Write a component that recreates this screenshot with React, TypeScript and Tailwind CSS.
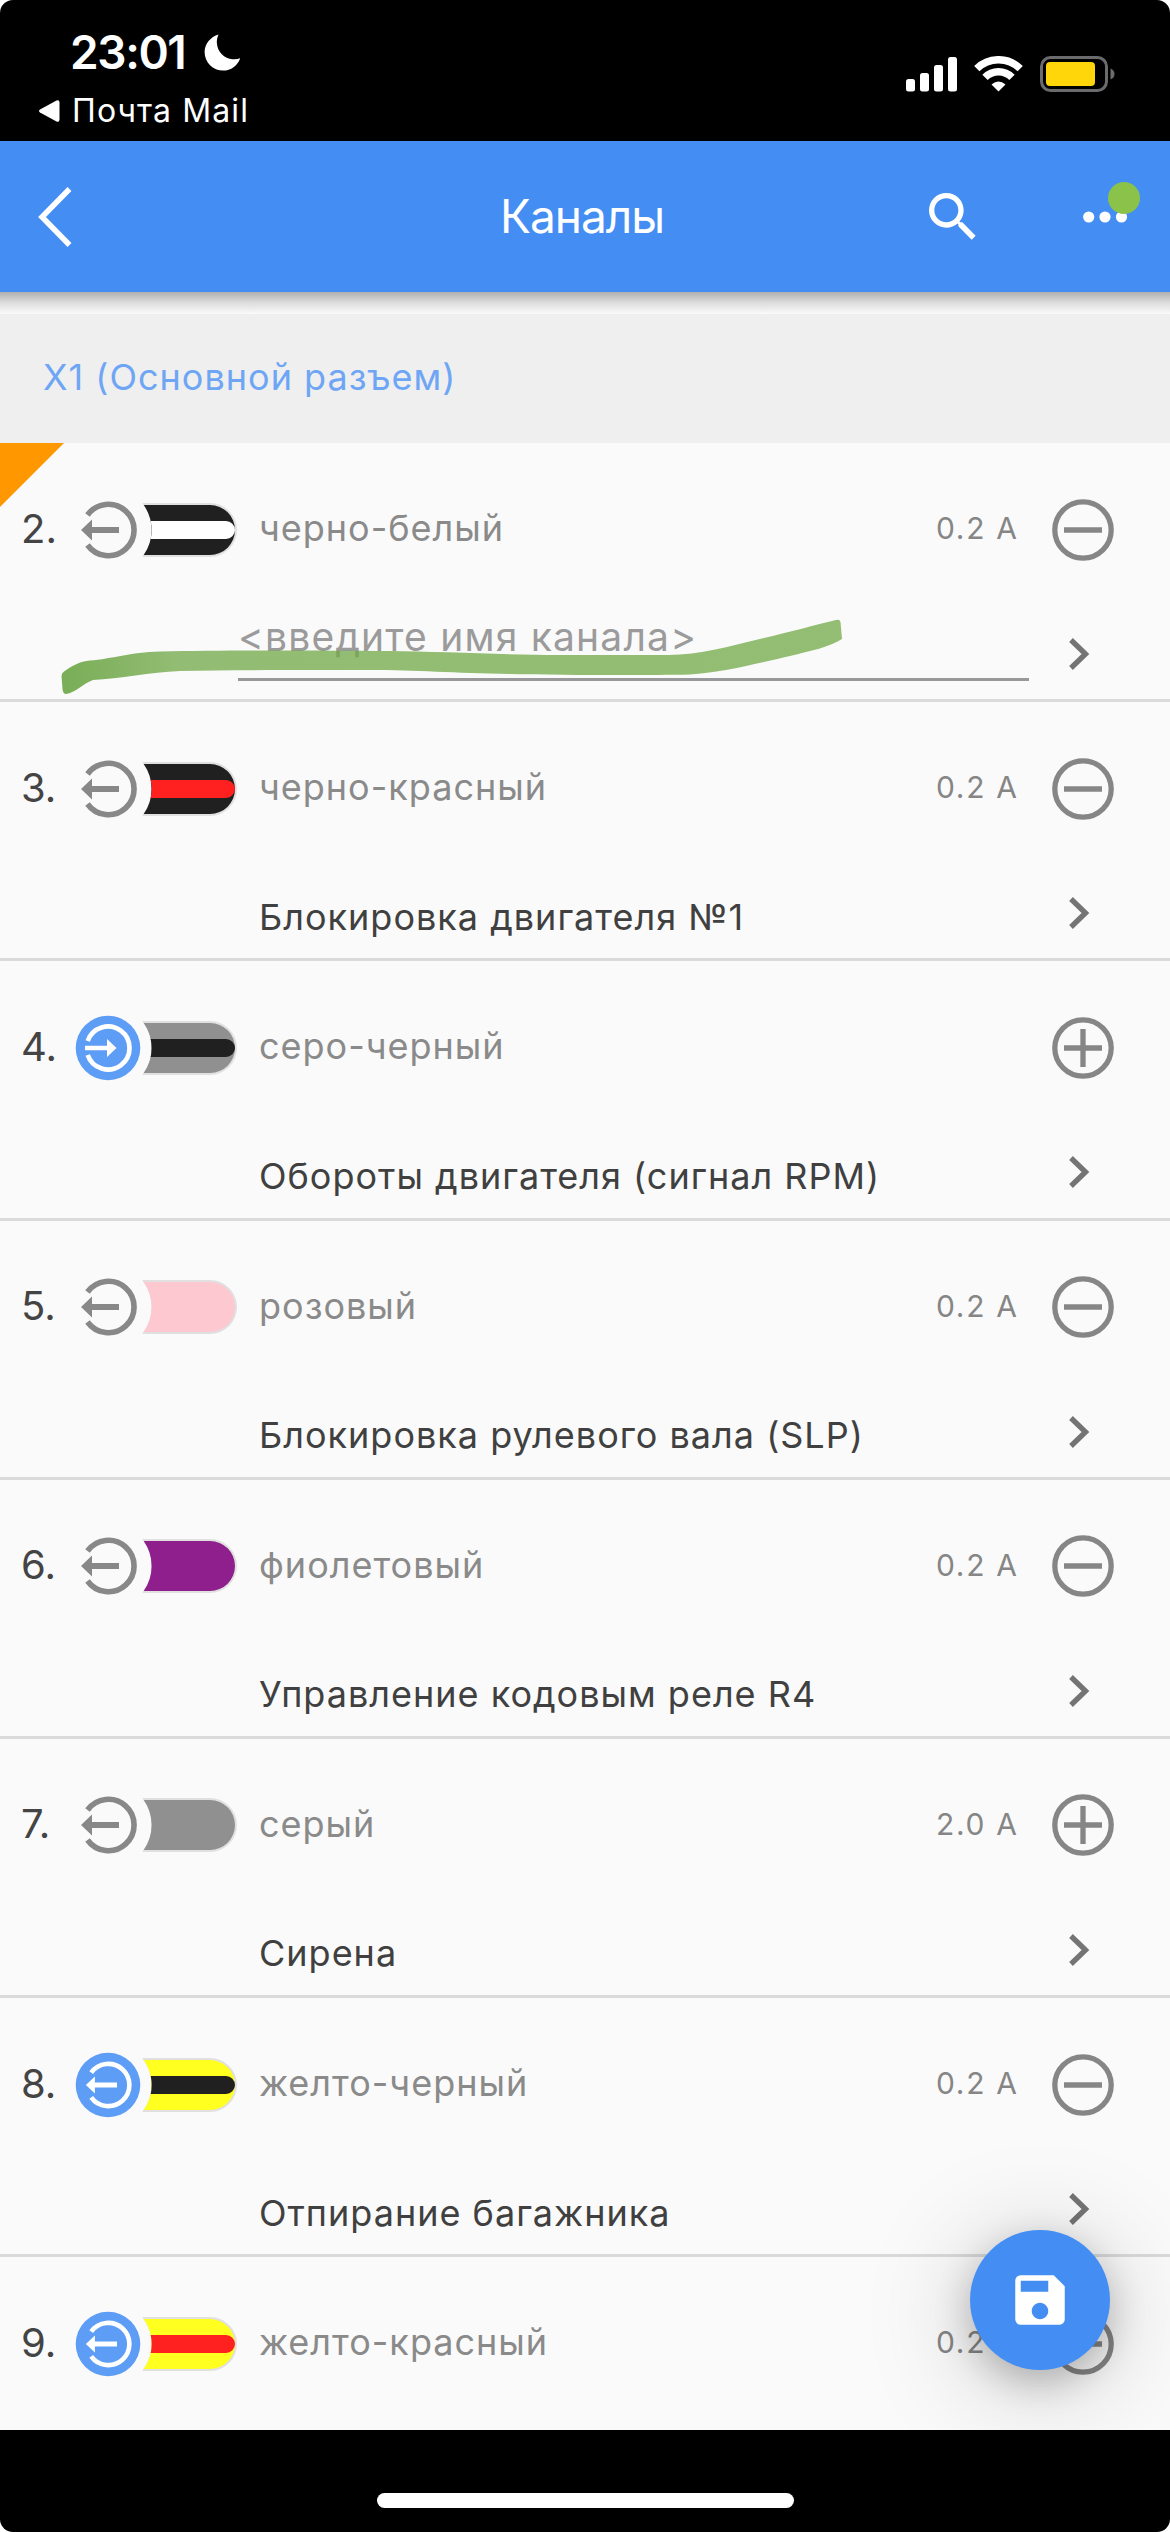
import clsx from 'clsx'
import { MdSave, MdSearch } from 'react-icons/md'

type Direction = 'out' | 'out-active' | 'in-active'

type Channel = {
  id: number
  direction: Direction
  base: string
  stripe?: string
  color: string
  amps?: string
  polarity: 'plus' | 'minus'
  name?: string
}

const CHANNELS: Channel[] = [
  { id: 2, direction: 'out', base: '#202020', stripe: '#ffffff', color: 'черно-белый', amps: '0.2 A', polarity: 'minus' },
  { id: 3, direction: 'out', base: '#202020', stripe: '#ff2020', color: 'черно-красный', amps: '0.2 A', polarity: 'minus', name: 'Блокировка двигателя №1' },
  { id: 4, direction: 'in-active', base: '#909090', stripe: '#202020', color: 'серо-черный', polarity: 'plus', name: 'Обороты двигателя (сигнал RPM)' },
  { id: 5, direction: 'out', base: '#fdc8d0', color: 'розовый', amps: '0.2 A', polarity: 'minus', name: 'Блокировка рулевого вала (SLP)' },
  { id: 6, direction: 'out', base: '#8f1f8c', color: 'фиолетовый', amps: '0.2 A', polarity: 'minus', name: 'Управление кодовым реле R4' },
  { id: 7, direction: 'out', base: '#909090', color: 'серый', amps: '2.0 A', polarity: 'plus', name: 'Сирена' },
  { id: 8, direction: 'out-active', base: '#ffff20', stripe: '#202020', color: 'желто-черный', amps: '0.2 A', polarity: 'minus', name: 'Отпирание багажника' },
  { id: 9, direction: 'out-active', base: '#ffff20', stripe: '#ff2020', color: 'желто-красный', amps: '0.2 A', polarity: 'minus', name: '' },
]

function StatusBar() {
  return (
    <div className="flex h-[141px] shrink-0 justify-between text-white">
      <div className="pl-[38px] pt-[25px]">
        <div className="flex h-[54px] items-center pl-[32px]">
          <span className="w-[134px] text-[46px] font-semibold leading-[54px] tracking-[-1.4px]">23:01</span>
          <svg className="h-[37px] w-[37px]" viewBox="0 0 37 37" fill="currentColor">
            <path d="M14.5 0.5C13.2 3.4 12.6 6.4 12.9 9.6C13.6 18 20.2 24.6 28.6 25.3C31.3 25.5 33.8 25.1 36.2 24.2C33.6 31.6 26.9 36.6 19.2 36.6C8.9 36.6 0.6 28.3 0.6 18C0.6 10 6.6 2.8 14.5 0.5Z" />
          </svg>
        </div>
        <div className="mt-[10px] flex h-[44px] items-center">
          <svg className="mr-[12px] h-[24px] w-[22px]" viewBox="0 0 22 24" fill="currentColor">
            <path d="M2 10.5L18.5 1.5Q21.5 0.5 21.5 3.5V20.5Q21.5 23.5 18.5 22.5L2 13.5Q0 12 2 10.5Z" />
          </svg>
          <span className="text-[32px] leading-[40px] tracking-[1.1px]">Почта Mail</span>
        </div>
      </div>

      <div className="mt-[56px] flex h-[36px] gap-[17px] pr-[54px]">
        <svg className="h-[36px] w-[51px]" viewBox="0 0 51 36" fill="currentColor">
          <rect x="0" y="23" width="9" height="12.5" rx="2.5" />
          <rect x="14" y="17" width="9" height="18.5" rx="2.5" />
          <rect x="28" y="9" width="9" height="26.5" rx="2.5" />
          <rect x="42" y="1" width="9" height="34.5" rx="2.5" />
        </svg>
        <svg className="h-[36px] w-[49px]" viewBox="0 0 49 36" fill="none" stroke="currentColor" strokeWidth="7.5">
          <path d="M2.8 12.6A31 31 0 0 1 46.2 12.6" />
          <path d="M11 21.4A19 19 0 0 1 38 21.4" />
          <path d="M24.5 35.5L17.5 28.5Q24.5 22.5 31.5 28.5Z" fill="currentColor" stroke="none" />
        </svg>
        <svg className="h-[36px] w-[76px]" viewBox="0 0 76 36">
          <rect x="1.5" y="1.5" width="65" height="33" rx="9" fill="none" stroke="#6b6b6e" strokeWidth="3" />
          <rect x="6" y="6" width="49" height="24" rx="4" fill="#ffd60a" />
          <path d="M70.5 12.5Q74.5 14 74.5 18T70.5 23.5Z" fill="#6b6b6e" />
        </svg>
      </div>
    </div>
  )
}

function NavBar() {
  return (
    <header className="flex h-[151px] shrink-0 items-center bg-[#448ef3] text-white">
      <svg className="ml-[38px] h-[62px] w-[36px]" viewBox="0 0 36 62" fill="none" stroke="currentColor" strokeWidth="5.5">
        <path d="M31.5 3L4 31L31.5 59" />
      </svg>
      <h1 className="ml-[426px] w-[421px] pb-[1px] text-[46px] leading-[56px] tracking-[-1px]">Каналы</h1>
      <MdSearch className="h-[64px] w-[64px]" />
      <svg className="ml-[98px] h-[72px] w-[60px]" viewBox="0 -6 60 72" fill="currentColor">
        <circle cx="5.7" cy="30" r="5.6" />
        <circle cx="22" cy="30" r="5.6" />
        <circle cx="38.5" cy="30" r="5.6" />
        <circle cx="41" cy="11" r="16" fill="#8bc34a" />
      </svg>
    </header>
  )
}

const ARROW_OUT = (
  <>
    <path d="M-20.5 -15A25.7 25.7 0 1 1 -20.5 15" fill="none" strokeWidth="5.6" />
    <path d="M11 -3H-16V-10.5L-27 0L-16 10.5V3H11Z" stroke="none" />
  </>
)

function DirectionIcon({ direction }: { direction: Direction }) {
  return (
    <svg className="h-[66px] w-[66px]" viewBox="-33 -33 66 66">
      {direction === 'out' && (
        <g fill="#888888" stroke="#888888">
          {ARROW_OUT}
        </g>
      )}
      {direction === 'out-active' && (
        <>
          <circle r="32.3" fill="#5d9df5" />
          <g fill="white" stroke="white" transform="scale(0.82)">
            {ARROW_OUT}
          </g>
        </>
      )}
      {direction === 'in-active' && (
        <>
          <circle r="32.3" fill="#5d9df5" />
          <path d="M-20.3 -7A21.5 21.5 0 1 1 -20.3 7" fill="none" stroke="white" strokeWidth="4.7" />
          <path d="M-23 -2.3H-1V-9L8.5 0L-1 9V2.3H-23Z" fill="white" />
        </>
      )}
    </svg>
  )
}

function Wire({ base, stripe }: { base: string; stripe?: string }) {
  return (
    <svg className="h-[56px] w-[98px]" viewBox="0 0 98 56">
      <path d="M1.2 1H69A27 27 0 0 1 69 55H1.2A43.6 43.6 0 0 0 1.2 1Z" fill="#e0e0e0" />
      <path d="M2.7 3H69A25 25 0 0 1 69 53H2.7A43.6 43.6 0 0 0 2.7 3Z" fill={base} />
      {stripe && <path d="M9.7 19H85A9 9 0 0 1 85 37H9.7A43.6 43.6 0 0 0 9.7 19Z" fill={stripe} />}
    </svg>
  )
}

function PolarityIcon({ polarity }: { polarity: 'plus' | 'minus' }) {
  return (
    <svg className="h-[62px] w-[62px]" viewBox="-31 -31 62 62" fill="none" stroke="#868686" strokeWidth="5.3">
      <circle r="28.2" />
      <path d={polarity === 'plus' ? 'M-19 0H19M0 -19V19' : 'M-19 0H19'} />
    </svg>
  )
}

function ChannelRow({ channel }: { channel: Channel }) {
  const { id, direction, base, stripe, color, amps, polarity, name } = channel
  return (
    <div className="relative h-[259.2px] shrink-0 border-b-[3px] border-[#dadada]">
      <div className="flex h-[173px] items-center">
        <span className="w-[75px] pb-[2px] pl-[21px] text-[40px] leading-[48px] text-[#444444]">{id}.</span>
        <DirectionIcon direction={direction} />
        <Wire base={base} stripe={stripe} />
        <span className="ml-[20px] flex-1 pb-[3px] text-[36px] leading-[44px] tracking-[1px] text-[#8a8a8a]">{color}</span>
        <span className="w-[116px] pb-[3px] text-[30px] leading-[40px] tracking-[1.7px] text-[#868686]">{amps}</span>
        <div className="mr-[56px]">
          <PolarityIcon polarity={polarity} />
        </div>
      </div>
      <div className="flex h-[83px] items-center">
        {name === undefined ? (
          <div className="ml-[238px] mt-[-20px] h-[66px] w-[791px] border-b-[3px] border-[#98989a]">
            <span className="block text-[39px] leading-[44px] tracking-[1.2px] text-[#9b9b9b]">&lt;введите имя канала&gt;</span>
          </div>
        ) : (
          <span className="ml-[259px] w-[770px] text-[36px] leading-[44px] tracking-[1px] text-[#404040]">{name}</span>
        )}
        <svg className="mb-[7px] ml-[39px] h-[32px] w-[22px]" viewBox="0 0 22 32" fill="none" stroke="#747474" strokeWidth="5.3">
          <path d="M3 2L17.5 16L3 30" />
        </svg>
      </div>
      {name === undefined && <NewChannelMarks />}
    </div>
  )
}

// Corner flag plus the marker drawn over the empty name field
function NewChannelMarks() {
  return (
    <svg className="pointer-events-none absolute left-0 top-0 h-[256px] w-[860px]" viewBox="0 0 860 256">
      <defs>
        <linearGradient id="marker" x1="62" x2="842" gradientUnits="userSpaceOnUse">
          <stop offset="0" stopColor="#62a03a" stopOpacity="0.85" />
          <stop offset="0.15" stopColor="#70a846" stopOpacity="0.75" />
          <stop offset="1" stopColor="#6aa63e" stopOpacity="0.72" />
        </linearGradient>
      </defs>
      <path d="M0 0H64L0 64Z" fill="#ff9800" />
      <path
        d="M61.5 233Q61.5 230 64 228.5C72 223 80 218 90 217.5C112 216 130 209 160 208.5C230 207 320 207.5 390 208C440 208.5 510 212 560 212H668C700 212 730 203 764 195C790 189 815 182 836 177Q840 176 840.5 179L842 196C830 204 810 208 790 213C760 220 720 230 690 231.5C640 232.5 560 232 510 231C450 230 410 226.5 360 227C290 227 230 227 180 228C150 229 120 236 93 237C84 240 75 250 66 251Q63 251 62.5 246Z"
        fill="url(#marker)"
      />
    </svg>
  )
}

export default function App() {
  return (
    <div className="h-[2532px] w-[1170px] overflow-hidden bg-white">
      <div className={clsx('flex h-full flex-col overflow-hidden rounded-[13px] bg-black', "font-['Inter','Noto_Sans',sans-serif]")}>
        <StatusBar />
        <NavBar />
        <main className="relative flex min-h-0 flex-1 flex-col overflow-hidden bg-[#fafafa]">
          <div className="h-[22px] shrink-0 bg-linear-to-b from-[#b0b0b0] via-[#dedede] to-[#fafafa]" />
          <h2 className="h-[129px] shrink-0 bg-[#efefef] pl-[43px] pt-[40px] text-[36px] leading-[46px] tracking-[1px] text-[#6ea6f5]">
            X1 (Основной разъем)
          </h2>
          {CHANNELS.map((channel) => (
            <ChannelRow key={channel.id} channel={channel} />
          ))}
          <button className="absolute bottom-[60px] right-[60px] flex h-[140px] w-[140px] items-center justify-center rounded-full bg-[#448ef3] text-white shadow-[0_12px_36px_rgba(0,0,0,0.22),0_14px_110px_rgba(0,0,0,0.22)]">
            <MdSave className="h-[66px] w-[66px]" />
          </button>
        </main>
        <div className="flex h-[102px] shrink-0 justify-center pt-[63px]">
          <div className="h-[15px] w-[417px] rounded-full bg-white" />
        </div>
      </div>
    </div>
  )
}
